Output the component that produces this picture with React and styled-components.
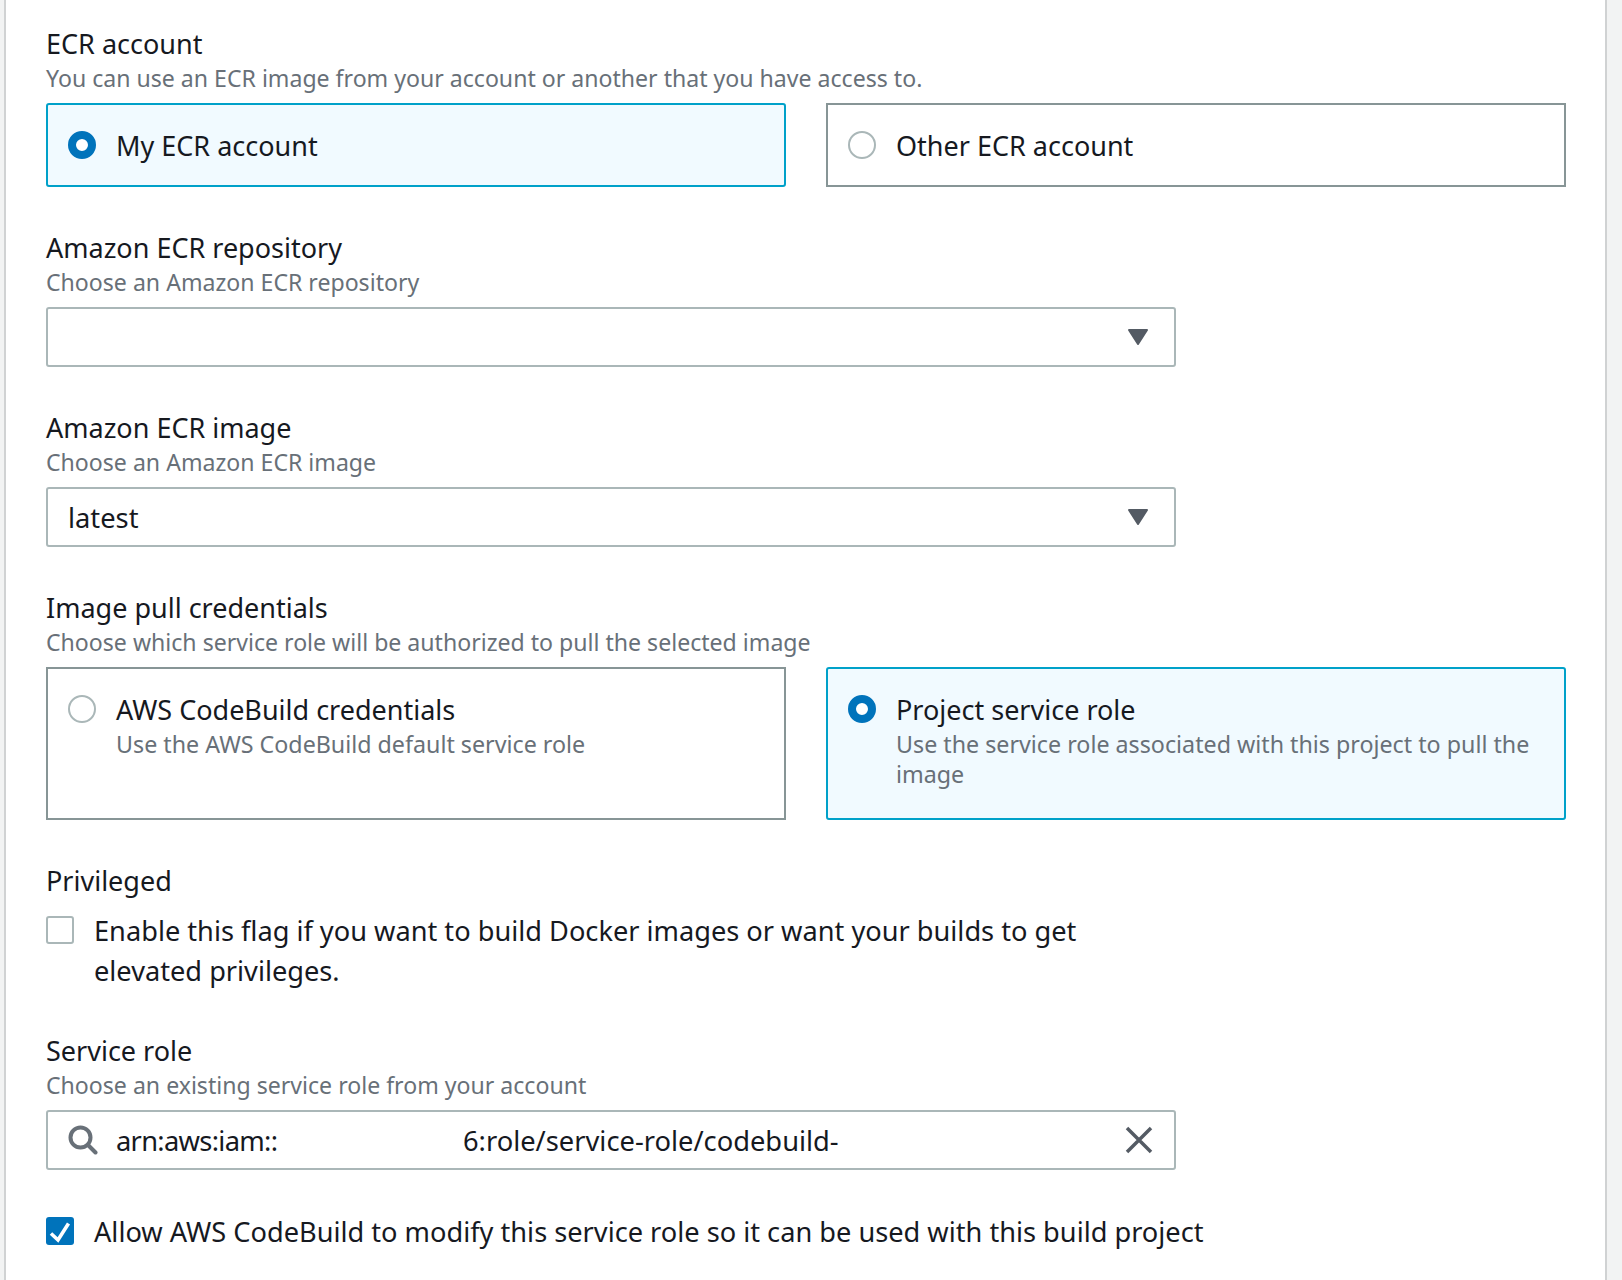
import React from "react";
import styled, { createGlobalStyle } from "styled-components";

const Global = createGlobalStyle`
  body {
    margin: 0;
    background: #f2f3f3;
    font-family: "Noto Sans", "Open Sans", sans-serif;
    color: #16191f;
  }
`;

const Panel = styled.div`
  box-sizing: border-box;
  height: 1280px;
  margin: 0 15px 0 4px;
  padding: 25px 40px 0 40px;
  background: #fff;
  border-left: 2px solid #d0d2d3;
  border-right: 2px solid #d0d2d3;
  overflow: hidden;
`;

const Field = styled.div`
  margin-bottom: ${(p) => p.$gap || 0}px;
`;

const Label = styled.div`
  font-size: 27px;
  line-height: 37px;
  margin-bottom: ${(p) => p.$gap || 0}px;
  color: #16191f;
`;

const Desc = styled.div`
  font-size: 23.1px;
  line-height: 32px;
  color: #687078;
  margin-bottom: 9px;
`;

const TileRow = styled.div`
  display: grid;
  grid-template-columns: 740px 740px;
  column-gap: 40px;
`;

const Tile = styled.div`
  box-sizing: border-box;
  height: ${(p) => p.$height}px;
  display: flex;
  align-items: flex-start;
  gap: 20px;
  padding: 25px 20px 0;
  border: 2px solid ${(p) => (p.$on ? "#00a1c9" : "#879596")};
  border-radius: ${(p) => (p.$on ? "3px" : "0")};
  background: ${(p) => (p.$on ? "#f1faff" : "#fff")};
`;

const Radio = styled.span`
  box-sizing: border-box;
  flex: none;
  width: 28px;
  height: 28px;
  margin-top: 1px;
  border-radius: 50%;
  background: #fff;
  border: ${(p) => (p.$on ? "8px solid #0073bb" : "2px solid #aab7b8")};
`;

const TileTitle = styled.div`
  font-size: 27px;
  line-height: 32px;
`;

const TileHint = styled.div`
  font-size: 23.25px;
  line-height: 30px;
  color: #687078;
  margin-top: 3px;
`;

const SelectBox = styled.div`
  box-sizing: border-box;
  width: 1130px;
  height: 60px;
  display: flex;
  align-items: center;
  padding: 0 20px;
  border: 2px solid #aab7b8;
  border-radius: 3px;
  font-size: 27.3px;
  background: #fff;
`;

const Value = styled.span`
  flex: 1;
  display: flex;
  white-space: nowrap;
`;

const ArnStart = styled.span`
  width: 161px;
  margin-right: 186px;
  letter-spacing: -0.7px;
`;

const SearchIcon = styled.svg`
  flex: none;
  margin-right: 18px;
`;

const CaretIcon = styled.svg`
  flex: none;
  margin-right: 5px;
`;

const CheckRow = styled.div`
  display: flex;
  align-items: flex-start;
  gap: 20px;
  width: 1060px;
`;

const Check = styled.span`
  box-sizing: border-box;
  flex: none;
  width: 28px;
  height: 28px;
  margin-top: 5px;
  border-radius: 3px;
  border: ${(p) => (p.$on ? "none" : "2px solid #aab7b8")};
  background: ${(p) => (p.$on ? "#0073bb" : "#fff")};
  display: flex;
`;

const CheckText = styled.div`
  font-size: 27.2px;
  line-height: 40px;
  flex: 1;
  white-space: ${(p) => (p.$nowrap ? "nowrap" : "normal")};
`;

const Caret = () => (
  <CaretIcon width="22" height="18" viewBox="0 0 22 18">
    <path d="M2 2h18L11 16z" fill="#545b64" stroke="#545b64" strokeWidth="2" strokeLinejoin="round" />
  </CaretIcon>
);

export default function App() {
  return (
    <>
      <Global />
      <Panel>
        <Field $gap={42}>
          <Label>ECR account</Label>
          <Desc>You can use an ECR image from your account or another that you have access to.</Desc>
          <TileRow>
            <Tile $on $height={84}>
              <Radio $on />
              <TileTitle>My ECR account</TileTitle>
            </Tile>
            <Tile $height={84}>
              <Radio />
              <TileTitle>Other ECR account</TileTitle>
            </Tile>
          </TileRow>
        </Field>

        <Field $gap={42}>
          <Label>Amazon ECR repository</Label>
          <Desc>Choose an Amazon ECR repository</Desc>
          <SelectBox>
            <Value />
            <Caret />
          </SelectBox>
        </Field>

        <Field $gap={42}>
          <Label>Amazon ECR image</Label>
          <Desc>Choose an Amazon ECR image</Desc>
          <SelectBox>
            <Value>latest</Value>
            <Caret />
          </SelectBox>
        </Field>

        <Field $gap={42}>
          <Label>Image pull credentials</Label>
          <Desc>Choose which service role will be authorized to pull the selected image</Desc>
          <TileRow>
            <Tile $height={153}>
              <Radio />
              <div>
                <TileTitle>AWS CodeBuild credentials</TileTitle>
                <TileHint>Use the AWS CodeBuild default service role</TileHint>
              </div>
            </Tile>
            <Tile $on $height={153}>
              <Radio $on />
              <div>
                <TileTitle>Project service role</TileTitle>
                <TileHint>Use the service role associated with this project to pull the image</TileHint>
              </div>
            </Tile>
          </TileRow>
        </Field>

        <Field $gap={41}>
          <Label $gap={12}>Privileged</Label>
          <CheckRow>
            <Check />
            <CheckText>Enable this flag if you want to build Docker images or want your builds to get elevated privileges.</CheckText>
          </CheckRow>
        </Field>

        <Field $gap={42}>
          <Label>Service role</Label>
          <Desc>Choose an existing service role from your account</Desc>
          <SelectBox>
            <SearchIcon width="30" height="30" viewBox="0 0 30 30">
              <circle cx="12.5" cy="12.5" r="10" fill="none" stroke="#687078" strokeWidth="4" />
              <path d="M20 20L27.5 27.5" stroke="#687078" strokeWidth="4" strokeLinecap="round" />
            </SearchIcon>
            <Value>
              <ArnStart>arn:aws:iam::</ArnStart>6:role/service-role/codebuild-
            </Value>
            <svg width="30" height="30" viewBox="0 0 30 30">
              <path d="M3 3L27 27M27 3L3 27" stroke="#545b64" strokeWidth="3.5" />
            </svg>
          </SelectBox>
        </Field>

        <CheckRow>
          <Check $on>
            <svg width="28" height="28" viewBox="0 0 28 28">
              <path d="M5 16.5L12 23L22.5 6.5" fill="none" stroke="#fff" strokeWidth="3.6" />
            </svg>
          </Check>
          <CheckText $nowrap>Allow AWS CodeBuild to modify this service role so it can be used with this build project</CheckText>
        </CheckRow>
      </Panel>
    </>
  );
}
